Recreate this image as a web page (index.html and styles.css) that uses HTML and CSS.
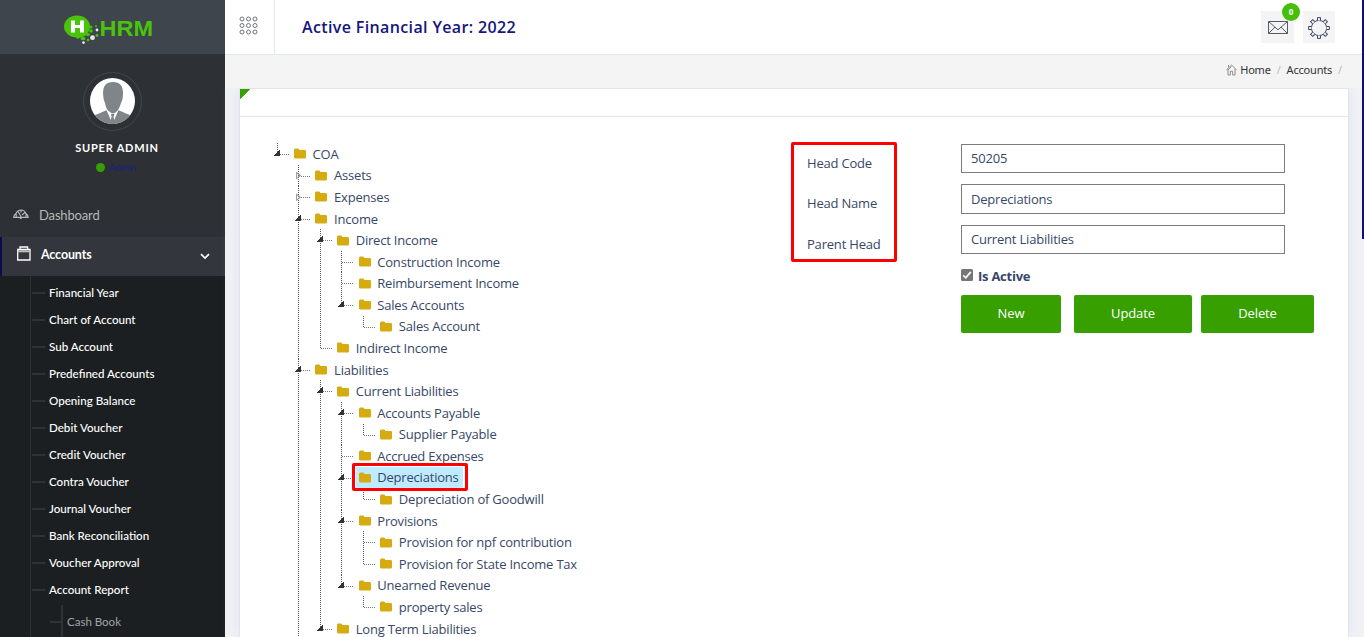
FILE: index.html
```html
<!DOCTYPE html>
<html lang="en">
<head>
<meta charset="utf-8">
<title>Chart of Account</title>
<link rel="stylesheet" href="styles.css">
</head>
<body>
<svg class="defs" width="0" height="0">
  <symbol id="folder" viewBox="0 0 12 11"><path d="M0 2Q0 .5 1.3 .5H4Q5.3 .5 5.3 2H10.7Q12 2 12 3.2V9.2Q12 10.5 10.7 10.5H1.3Q0 10.5 0 9.2Z" fill="#d5ab10"/></symbol>
</svg>
<div class="app">
  <aside class="sidebar">
    <div class="brand">
      <svg width="92" height="30" viewBox="0 0 92 30">
        <ellipse cx="14" cy="11.5" rx="13" ry="11" fill="#49c30b"/>
        <path d="M11 18L24 12V20L14 24Z" fill="#49c30b"/>
        <path d="M8 5.5h4v4.5h5V5.5h4v12h-4v-4.5h-5v4.5H8z" fill="#fff"/>
        <ellipse cx="20" cy="23.5" rx="2.5" ry="1.8" fill="#49c30b"/><circle cx="25" cy="19.5" r="1.8" fill="#49c30b"/><circle cx="28" cy="12" r="1.5" fill="#49c30b"/><circle cx="28" cy="16" r="1.8" fill="#49c30b"/><circle cx="33" cy="11" r="1" fill="#49c30b"/><circle cx="25" cy="25" r="1.3" fill="#49c30b"/><circle cx="34" cy="20.5" r="1.4" fill="#49c30b"/>
        <circle cx="29.5" cy="22.7" r="2.4" fill="#e7eaec"/><circle cx="34" cy="15" r="1.4" fill="#e7eaec"/><circle cx="20.5" cy="27.6" r="1.4" fill="#dfe3e5"/>
        <text x="36.5" y="20.8" textLength="53.5" lengthAdjust="spacingAndGlyphs" class="brand-text">HRM</text>
      </svg>
    </div>
    <div class="profile">
      <div class="avatar">
        <svg width="45" height="46" viewBox="0 0 45 46"><defs><clipPath id="face"><ellipse cx="22.5" cy="23" rx="22.5" ry="23"/></clipPath></defs>
          <g clip-path="url(#face)"><rect width="45" height="46" fill="#fff"/><path d="M0 46V39Q8 36 17 32L22.5 37L28 32Q37 36 45 39V46Z" fill="#808589"/><path d="M16 31L22.5 46L29 31L22.5 35Z" fill="#fff"/><path d="M21 36h3.5l-1 3 2 7h-6l2-7z" fill="#808589"/><path d="M13 15Q13 4 23 4Q33 4 33 15Q33 22 31 25Q29 32 26 34Q23 37 20 34Q16 32 15 25Q13 21 13 15Z" fill="#808589"/></g></svg>
      </div>
      <div class="name">SUPER ADMIN</div>
      <div class="role"><i class="online"></i>Admin</div>
    </div>
    <a class="nav">
      <svg width="16" height="10" viewBox="0 0 16 10" fill="none" stroke="#b4b8bb" stroke-width="1.2"><path d="M.7 8.3Q1 5.8 2.8 4.8Q4.6 1 8 1Q11.4 1 13 4.8Q15 5.8 15.2 8.3H9L7.8 9.5L6.5 8.3ZM.7 8.3H15.2M3.2 8V5M5 2.5L8.2 8M8 1.2V3.5M12 3.5L9 6M13 8V5.5"/></svg>
      <span>Dashboard</span>
    </a>
    <a class="nav current">
      <svg width="14" height="15" viewBox="0 0 14 15" fill="none" stroke="#fff" stroke-width="1.3"><path d="M.7 3.5H13V14H.7ZM3 3V1H10.6V3"/><path d="M.7 5.3H13" stroke="#bfc2c4" stroke-width="2"/></svg>
      <span>Accounts</span>
      <svg class="chev" width="10" height="7" viewBox="0 0 10 7" fill="none" stroke="#fff" stroke-width="1.7"><path d="M1 1.2L5 5L9 1.2"/></svg>
    </a>
    <ul class="sub">
      <li>Financial Year</li><li>Chart of Account</li><li>Sub Account</li><li>Predefined Accounts</li><li>Opening Balance</li><li>Debit Voucher</li><li>Credit Voucher</li><li>Contra Voucher</li><li>Journal Voucher</li><li>Bank Reconciliation</li><li>Voucher Approval</li><li>Account Report</li>
    </ul>
    <ul class="subsub"><li>Cash Book</li></ul>
  </aside>
  <div class="page">
    <header class="topbar">
      <div class="toggle"><svg width="20" height="20" viewBox="0 0 20 20" fill="none" stroke="#6d7483"><circle cx="3" cy="3" r="2"/><circle cx="9.5" cy="3" r="2"/><circle cx="16" cy="3" r="2"/><circle cx="3" cy="9.5" r="2"/><circle cx="9.5" cy="9.5" r="2"/><circle cx="16" cy="9.5" r="2"/><circle cx="3" cy="16" r="2"/><circle cx="9.5" cy="16" r="2"/><circle cx="16" cy="16" r="2"/></svg></div>
      <h1>Active Financial Year: 2022</h1>
      <div class="tools">
        <div class="tool mail"><svg width="20" height="13" viewBox="0 0 20 13" fill="none" stroke="#555b6b"><path d="M.5 .5H19.5V12.5H.5ZM.5 .5L10 8.8L19.5 .5M.5 12.5L7 6.2M19.5 12.5L13 6.2"/></svg><b>0</b></div>
        <div class="tool gear"><svg width="22" height="22" viewBox="0 0 22 22" fill="none" stroke="#3b4661"><circle cx="11" cy="11" r="7.6"/><g fill="#f4f4f4"><path id="tooth" d="M9.5 3.5V.6H12.5V3.5"/><use href="#tooth" transform="rotate(45 11 11)"/><use href="#tooth" transform="rotate(90 11 11)"/><use href="#tooth" transform="rotate(135 11 11)"/><use href="#tooth" transform="rotate(180 11 11)"/><use href="#tooth" transform="rotate(225 11 11)"/><use href="#tooth" transform="rotate(270 11 11)"/><use href="#tooth" transform="rotate(315 11 11)"/></g></svg></div>
      </div>
    </header>
    <nav class="crumbs"><svg width="11" height="12" viewBox="0 0 11 12" fill="none" stroke="#89857f" stroke-width=".9"><path d="M.3 6L5.5 1L10.7 6M2 5V11H4.3V7.3H6.7V11H9V5M2.5 3.5V1M5.5 2.5L2 6"/></svg><span>Home</span><i>/</i><span>Accounts</span><i>/</i></nav>
    <main class="panel">
      <div class="panel-head"></div>
      <div class="panel-body">
        <ul class="tree">
          <li class="last"><div class="node open"><svg><use href="#folder"/></svg>COA</div>
            <ul>
              <li><div class="node shut"><svg><use href="#folder"/></svg>Assets</div></li>
              <li><div class="node shut"><svg><use href="#folder"/></svg>Expenses</div></li>
              <li><div class="node open"><svg><use href="#folder"/></svg>Income</div>
                <ul>
                  <li><div class="node open"><svg><use href="#folder"/></svg>Direct Income</div>
                    <ul>
                      <li><div class="node"><svg><use href="#folder"/></svg>Construction Income</div></li>
                      <li><div class="node"><svg><use href="#folder"/></svg>Reimbursement Income</div></li>
                      <li class="last"><div class="node open"><svg><use href="#folder"/></svg>Sales Accounts</div>
                        <ul><li class="last"><div class="node"><svg><use href="#folder"/></svg>Sales Account</div></li></ul></li>
                    </ul></li>
                  <li class="last"><div class="node"><svg><use href="#folder"/></svg>Indirect Income</div></li>
                </ul></li>
              <li><div class="node open"><svg><use href="#folder"/></svg>Liabilities</div>
                <ul>
                  <li><div class="node open"><svg><use href="#folder"/></svg>Current Liabilities</div>
                    <ul>
                      <li><div class="node open"><svg><use href="#folder"/></svg>Accounts Payable</div>
                        <ul><li class="last"><div class="node"><svg><use href="#folder"/></svg>Supplier Payable</div></li></ul></li>
                      <li><div class="node"><svg><use href="#folder"/></svg>Accrued Expenses</div></li>
                      <li><div class="node open selected"><span class="hit"><svg><use href="#folder"/></svg>Depreciations</span></div>
                        <ul><li class="last"><div class="node"><svg><use href="#folder"/></svg>Depreciation of Goodwill</div></li></ul></li>
                      <li><div class="node open"><svg><use href="#folder"/></svg>Provisions</div>
                        <ul><li><div class="node"><svg><use href="#folder"/></svg>Provision for npf contribution</div></li>
                        <li class="last"><div class="node"><svg><use href="#folder"/></svg>Provision for State Income Tax</div></li></ul></li>
                      <li class="last"><div class="node open"><svg><use href="#folder"/></svg>Unearned Revenue</div>
                        <ul><li class="last"><div class="node"><svg><use href="#folder"/></svg>property sales</div></li></ul></li>
                    </ul></li>
                  <li class="last"><div class="node open"><svg><use href="#folder"/></svg>Long Term Liabilities</div></li>
                </ul></li>
            </ul></li>
        </ul>
        <form class="form">
          <div class="labels"><label>Head Code</label><label>Head Name</label><label>Parent Head</label></div>
          <div class="fields">
            <input type="text" value="50205"><input type="text" value="Depreciations"><input type="text" value="Current Liabilities">
            <div class="active"><svg width="12" height="12" viewBox="0 0 12 12"><rect width="12" height="12" rx="1.5" fill="#767676"/><path d="M2.2 6.3L4.8 8.8L9.8 2.8" fill="none" stroke="#fff" stroke-width="1.8"/></svg><span>Is Active</span></div>
            <div class="buttons"><button type="button">New</button><button type="button">Update</button><button type="button">Delete</button></div>
          </div>
        </form>
      </div>
    </main>
  </div>
  <div class="scroll"></div>
</div>
</body>
</html>
```
FILE: styles.css
```css
*, ::before, ::after { box-sizing: border-box; }
body { margin: 0; height: 637px; overflow: hidden; font: 13px "Open Sans", sans-serif; color: #374767; }
ul { list-style: none; margin: 0; padding: 0; }
svg { flex: none; display: block; }
.defs { position: absolute; }
.app { display: flex; height: 637px; overflow: hidden; background: #f1f2f6; position: relative; }
.scroll { position: absolute; right: 0; top: 0; width: 2px; height: 239px; background: #10106a; }

.sidebar { width: 225px; flex: none; background: #2d3135; color: #fff; font-family: Lato, sans-serif; overflow: hidden; display: flex; flex-direction: column; }
.brand { height: 54px; flex: none; background: #3f454c; padding: 15px 0 0 63px; }
.brand-text { font: bold 21.5px "Liberation Sans", sans-serif; fill: #49c30b; }
.profile { height: 142px; flex: none; display: flex; flex-direction: column; align-items: center; padding-top: 18px; }
.avatar { width: 59px; height: 59px; border: 1px solid #42474b; border-radius: 50%; display: grid; place-items: center; }
.avatar svg { margin-top: -1px; }
.name { margin: 8px 0 0 9px; font-weight: bold; font-size: 11px; line-height: 18px; letter-spacing: .8px; }
.role { display: flex; align-items: center; gap: 4px; color: #1d1d85; font-size: 10px; line-height: 20px; margin: 0 0 0 7px; letter-spacing: -.2px; }
.online { width: 9px; height: 9px; border-radius: 50%; background: #37a000; }
.nav { height: 41px; flex: none; display: flex; align-items: center; gap: 10px; padding: 0 0 4px 13px; color: #b4b8bb; font-size: 13px; letter-spacing: -.15px; }
.nav svg:first-child { margin-top: -2px; }
.nav.current { height: 39px; color: #fff; font-weight: bold; background: #33373d; border-left: 2px solid #0c0c4f; padding: 0 15px 4px 15px; font-size: 12.5px; letter-spacing: -.15px; }
.chev { margin: 4px 0 0 auto; }
.sub { flex: none; background: linear-gradient(#2d3135, #2d3135) 30px 0 / 1px 100% no-repeat #1c1f21; padding: 3px 0 0; }
.sub li { height: 27px; line-height: 27px; padding-left: 49px; font-size: 11.6px; font-weight: 500; background: linear-gradient(#2d3437, #2d3437) 32px 13px / 13px 2px no-repeat; }
.subsub { flex: 1; background: linear-gradient(#2d3437, #2d3437) 61px 2px / 2px 100% no-repeat, linear-gradient(#2d3135, #2d3135) 30px 0 / 1px 100% no-repeat #1c1f21; }
.subsub li { padding-left: 67px; color: #a0a3a6; font-size: 11.5px; line-height: 38px; background: linear-gradient(#2d3437, #2d3437) 50px 18px / 11px 2px no-repeat; }

.page { flex: 1; min-width: 0; display: flex; flex-direction: column; }
.topbar { height: 55px; flex: none; background: #fff; border-bottom: 1px solid #e1e6ef; display: flex; align-items: center; }
.toggle { width: 50px; height: 54px; border-right: 1px solid #e1e6ef; padding: 16px 0 0 14px; }
h1 { margin: 0 0 0 27px; font-size: 16px; font-weight: 600; letter-spacing: .37px; color: #15157f; }
.tools { margin-left: auto; display: flex; gap: 9px; padding-right: 29px; }
.tool { width: 33px; height: 32px; background: #f4f4f4; display: grid; place-items: center; position: relative; }
.gear { width: 32px; }
.tool svg { margin-top: 1px; }
.tool b { position: absolute; left: 21px; top: -8px; width: 18px; height: 18px; border-radius: 50%; background: #44bf0a; color: #fff; font-size: 8px; line-height: 17px; text-align: center; }
.crumbs { position: relative; height: 33px; flex: none; display: flex; align-items: center; justify-content: flex-end; padding: 0 22px 4px 0; background: #f4f4f4; color: #333; font-family: "Noto Sans", sans-serif; font-size: 11px; letter-spacing: -.2px; }
.crumbs svg { margin-right: 3px; }
.crumbs i { font-style: normal; color: #bbb; margin: 0 6px; }
.crumbs i:last-child { margin-right: 0; }
.panel { flex: 1; min-height: 0; margin: 0 15px 0 14px; background: #fff; border: 1px solid #e1e4ef; border-bottom: 0; box-shadow: 0 0 14px #e1e3ee; overflow: hidden; }
.panel-head { height: 28px; border-bottom: 1px solid #e4e5ee; background: linear-gradient(135deg, #37a000 7px, #fff 7.5px); }
.panel-body { display: flex; padding: 26px 0 0 36.5px; }

.tree { width: 514.5px; flex: none; letter-spacing: -.2px; }
.tree li { background: repeating-linear-gradient(#555 0 1px, transparent 1px 2px) 0 0 / 1px 100% no-repeat; }
.tree li.last { background-size: 1px 12px; }
.tree ul { padding-left: 21.6px; }
.node { height: 21.58px; display: flex; align-items: center; padding-left: 17.4px; position: relative; background: repeating-linear-gradient(90deg, #777 0 1px, transparent 1px 2px) 1px 11px / 11px 1px no-repeat; white-space: nowrap; }
.node svg { width: 12px; height: 11px; margin-right: 6.6px; }
.node.open::before { content: ""; position: absolute; left: -3px; top: 7px; width: 6px; height: 6px; background: linear-gradient(135deg, transparent 48%, #333 50%); }
.node.shut::before { content: ""; position: absolute; left: -2px; top: 7px; width: 5px; height: 8px; background: #999; clip-path: polygon(0 0, 100% 50%, 0 100%, 0 0, 1px 2px, 1px 6px, 3px 50%, 1px 2px); }
.hit { display: flex; align-items: center; height: 21px; background: #beebff; margin-left: -3px; padding: 0 4px 0 3px; }
.selected::after { content: ""; position: absolute; left: 11px; top: -4px; width: 116px; height: 28px; border: 3px solid #f00; border-radius: 2px; }

.form { display: flex; align-items: flex-start; letter-spacing: -.2px; }
.labels { width: 106px; height: 120px; margin: -1px 64px 0 0; border: 3px solid #f00; border-radius: 2px; padding-left: 13px; }
.labels label { display: block; height: 40.4px; line-height: 36px; }
.fields { display: flex; flex-direction: column; gap: 11px; padding-top: 1px; }
.fields input { width: 324px; height: 29.4px; border: 1px solid #7c7c7c; padding: 0 9px 1px; font: inherit; letter-spacing: inherit; color: inherit; background: #fff; }
.active { display: flex; align-items: center; gap: 5px; font-weight: 700; height: 22px; letter-spacing: -.25px; }
.active svg { margin-top: -2px; }
.buttons { display: flex; margin-top: -3px; }
button { height: 38px; border: 0; border-radius: 2px; background: #37a000; color: #fff; font: 500 13px "Open Sans", sans-serif; width: 100px; padding: 0 0 2px; letter-spacing: -.1px; }
button:nth-child(2) { width: 118px; margin: 0 9px 0 13px; }
button:nth-child(3) { width: 113px; }
```
